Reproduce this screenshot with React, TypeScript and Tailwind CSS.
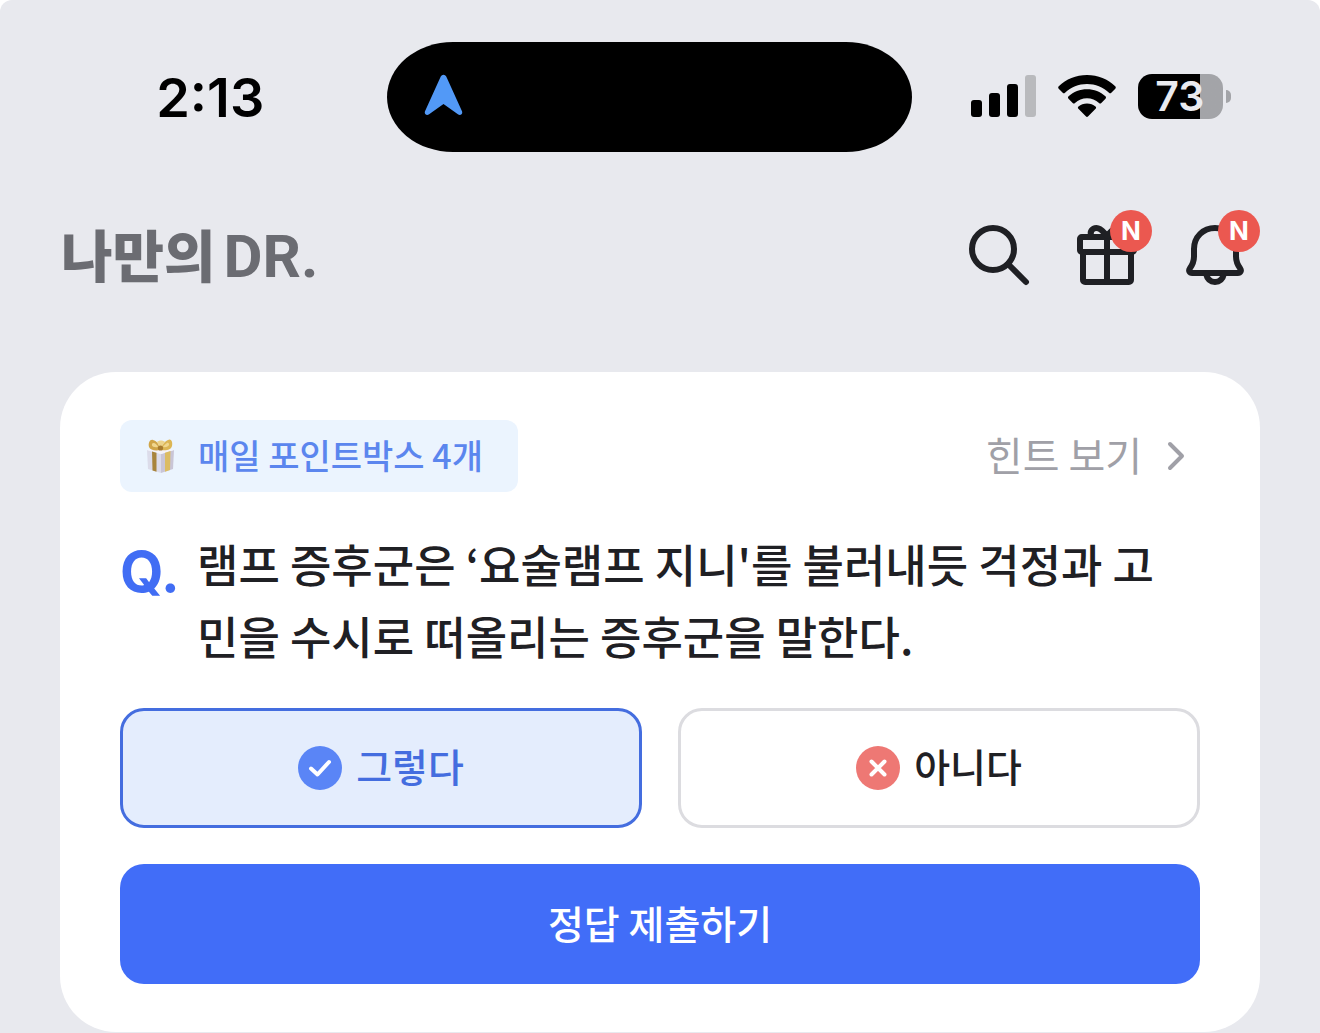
import { useState } from 'react';
import type { ReactNode } from 'react';

type Answer = 'yes' | 'no';

function StatusBar() {
  return (
    <div className="grid grid-cols-[1fr_525px_1fr] items-center pt-[42px] pr-[22px]">
      <time className="pt-0.5 pl-[34px] text-center font-['Inter',sans-serif] text-[54px] leading-none font-semibold text-black">
        2:13
      </time>
      <div className="flex h-[110px] items-center rounded-[66px/55px] bg-black pb-1 pl-9">
        <svg width="40" height="44" viewBox="0 0 40 44" className="fill-[#5299f7]">
          <path d="M17.300 4.400C18.600 1 22.400 1 23.700 4.400L39 38.300C40.100 41.300 37.200 43.100 34.900 41.300L20.500 31L6.100 41.300C3.800 43.100 .9 41.300 2 38.300Z" />
        </svg>
      </div>
      <div className="flex items-center justify-center gap-[22px] pr-[7px] pb-0.5">
        <svg width="65" height="42" viewBox="0 0 65 42">
          <rect x="0" y="25" width="11" height="17" rx="3" />
          <rect x="18" y="18" width="11" height="24" rx="3" />
          <rect x="36" y="9" width="11" height="33" rx="3" />
          <rect x="54" y="0" width="11" height="42" rx="3" fill="#b9babd" />
        </svg>
        <svg width="58" height="43" viewBox="0 0 58 43">
          <path d="M29 0C40 0 50 4.200 57.200 11.300C58 12.100 58 13 57.300 13.700L53.300 17.700C52.600 18.400 51.700 18.400 51 17.700C45 12.200 37.400 9 29 9S13 12.200 7 17.700C6.300 18.400 5.400 18.400 4.700 17.700L.7 13.700C0 13 0 12.100 .8 11.300C8 4.200 18 0 29 0Z" />
          <path d="M29 14.200C36 14.200 42.500 16.800 47.400 21.300C48.200 22 48.200 23 47.500 23.700L43.300 27.900C42.600 28.600 41.800 28.600 41 27.900C37.800 25 33.500 23.300 29 23.300S20.200 25 17 27.900C16.200 28.600 15.400 28.600 14.700 27.900L10.500 23.700C9.800 23 9.800 22 10.600 21.300C15.500 16.800 22 14.200 29 14.200Z" />
          <path d="M29 28.500C32.300 28.500 35.200 29.600 37.500 31.500C38.300 32.200 38.300 33 37.600 33.700L30.200 41.300C29.400 42.100 28.600 42.100 27.800 41.300L20.400 33.700C19.700 33 19.700 32.200 20.500 31.500C22.800 29.600 25.700 28.500 29 28.500Z" />
        </svg>
        <div className="flex items-center gap-[3px]">
          <div className="flex h-[45px] w-[85px] items-center justify-center rounded-[14px] bg-linear-to-r from-black from-73% to-[#a3a4a8] to-73% pr-0.5 font-['Inter',sans-serif] text-[41px] leading-none font-semibold text-[#e9eaef]">
            73
          </div>
          <div className="h-[13px] w-[5px] rounded-r-full bg-[#a3a4a8]" />
        </div>
      </div>
    </div>
  );
}

function IconButton({ label, isNew, children }: { label: string; isNew?: boolean; children: ReactNode }) {
  return (
    <button type="button" aria-label={label} className="relative">
      <svg
        width="72"
        height="72"
        viewBox="0 0 24 24"
        fill="none"
        stroke="#1f2024"
        strokeWidth="2"
        strokeLinecap="round"
        strokeLinejoin="round"
      >
        {children}
      </svg>
      {isNew && (
        <span className="absolute -top-[9px] -right-[9px] flex size-[42px] items-center justify-center rounded-full bg-[#eb5850] font-['Inter',sans-serif] text-[26px] leading-none font-bold text-white">
          N
        </span>
      )}
    </button>
  );
}

function Header() {
  return (
    <header className="flex items-center justify-between pt-[67px] pr-[69px] pl-[61px]">
      <h1 className="flex items-center gap-2 pb-1 text-[56px] leading-[60px] font-black text-[#6b6c72]">
        <span>나만의</span>
        <span className="pt-2 font-['Roboto',sans-serif] text-[60px] font-bold">DR.</span>
      </h1>
      <div className="flex gap-9">
        <IconButton label="검색">
          <circle cx="10" cy="10" r="7" />
          <path d="M15 15L21 21" />
        </IconButton>
        <IconButton label="선물" isNew>
          <rect x="3" y="6" width="18" height="5" rx="0.6" />
          <path d="M4 11V20.300C4 20.700 4.300 21 4.700 21H19.300C19.700 21 20 20.700 20 20.300V11" />
          <path d="M12 6V21" />
          <path d="M6.900 5.800C6 4.300 7.100 3 8.500 3C10 3 10.800 4.400 12 5.600C13.200 4.400 14 3 15.500 3C16.900 3 18 4.300 17.100 5.800" />
        </IconButton>
        <IconButton label="알림" isNew>
          <path d="M12 3C8 3 5 6 5 10V12.500C5 14.500 4.400 15.400 3.600 16.500C3.100 17.300 3.500 18 4.400 18H19.600C20.500 18 20.900 17.300 20.400 16.500C19.600 15.400 19 14.500 19 12.500V10C19 6 16 3 12 3Z" />
          <path d="M9 18.300C9.400 20 10.500 21 12 21S14.600 20 15 18.300" />
        </IconButton>
      </div>
    </header>
  );
}

function GiftBox() {
  return (
    <svg width="30" height="36" viewBox="0 0 30 36">
      <path d="M1 12L15 16V35L2 31Z" fill="#dcdcea" />
      <path d="M15 16L28 12L27 31L15 35Z" fill="#c9c5d6" />
      <path d="M1 12L14 9L28 12L15 16Z" fill="#f4f2f8" />
      <path d="M6 13.400L10.500 14.700V33.700L6.500 32.400Z" fill="#a8843c" />
      <path d="M19 14.800L24.500 13.100L24 32L19 33.700Z" fill="#dcbc62" />
      <path d="M14 12C9 13 4 12 3 9C2 5 4 1 7 2C11 3 14 7 14 12Z" fill="#d0a548" />
      <path d="M15 12C20 13 25 12 26 8C27 4 25 0 22 2C18 4 15 7 15 12Z" fill="#dcb655" />
      <path d="M12 9C9 9.500 6.500 9 6 7.500S6.500 4.500 8 5S11.500 7 12 9Z" fill="#f0d78f" />
      <path d="M17 9C20 9.500 22.500 8.500 23 7S22 4 21 5S17.500 7 17 9Z" fill="#f0d78f" />
      <path d="M11 4C13 2 17 2 19 4L16 8H13Z" fill="#edd48c" />
      <circle cx="14.500" cy="10" r="2.600" fill="#a87c30" />
    </svg>
  );
}

const OPTIONS: { value: Answer; label: string; color: string; mark: string }[] = [
  { value: 'yes', label: '그렇다', color: '#5a85f6', mark: 'M13 22.500L19.500 28.500L31 16' },
  { value: 'no', label: '아니다', color: '#ee7874', mark: 'M15.500 15.500L28.500 28.500M28.500 15.500L15.500 28.500' },
];

function Quiz() {
  const [answer, setAnswer] = useState<Answer>('yes');

  return (
    <form
      className="mx-[60px] mt-[81px] rounded-[56px] bg-white px-[60px] py-12"
      onSubmit={(e) => e.preventDefault()}
    >
      <div className="flex items-center justify-between">
        <div className="flex h-[72px] items-center gap-[22px] rounded-xl bg-[#ebf4fe] pr-[35px] pl-[26px] text-[34px] leading-none font-medium text-[#5b86ee]">
          <GiftBox />
          <span className="pb-0.5">매일 포인트박스 4개</span>
        </div>
        <a href="#hint" className="flex items-center gap-2.5 text-[40px] leading-[68px] text-[#a0a0a7]">
          <span className="pb-1">힌트 보기</span>
          <svg width="48" height="48" viewBox="0 0 48 48" fill="none" stroke="currentColor" strokeWidth="4" strokeLinecap="round" strokeLinejoin="round">
            <path d="M18 12L30 24L18 36" />
          </svg>
        </a>
      </div>

      <fieldset>
        <legend className="flex pt-9 pr-6 text-[45px] leading-[72px] font-medium text-[#1f2024]">
          <span className="w-[77px] shrink-0 pt-2 font-['Inter',sans-serif] text-[56px] font-bold text-[#416df4]">Q.</span>
          <span className="break-all">
            램프 증후군은 ‘요술램프 지니'를 불러내듯 걱정과 고민을 수시로 떠올리는 증후군을 말한다.
          </span>
        </legend>
        <div className="grid grid-cols-2 gap-9 pt-9">
          {OPTIONS.map((o) => (
            <label
              key={o.value}
              className="flex h-[120px] cursor-pointer items-center justify-center gap-3.5 rounded-3xl border-3 border-[#dcdce0] text-[39px] font-medium text-[#1f2024] has-checked:border-[#446ddf] has-checked:bg-[#e4edfd] has-checked:text-[#446ddf]"
            >
              <input
                type="radio"
                name="answer"
                value={o.value}
                checked={answer === o.value}
                onChange={() => setAnswer(o.value)}
                className="sr-only"
              />
              <svg width="44" height="44" viewBox="0 0 44 44" fill="none" stroke="#fff" strokeWidth="4" strokeLinecap="round" strokeLinejoin="round">
                <circle cx="22" cy="22" r="22" fill={o.color} stroke="none" />
                <path d={o.mark} />
              </svg>
              <span className="pb-1.5">{o.label}</span>
            </label>
          ))}
        </div>
      </fieldset>

      <button
        type="submit"
        className="mt-9 h-[120px] w-full rounded-3xl bg-[#416df8] pb-1 text-[39px] font-medium text-white"
      >
        정답 제출하기
      </button>
    </form>
  );
}

export default function App() {
  return (
    <main className="min-h-screen rounded-t-xl bg-[#e8e9ee] font-['Noto_Sans_CJK_KR',sans-serif]">
      <StatusBar />
      <Header />
      <Quiz />
    </main>
  );
}
